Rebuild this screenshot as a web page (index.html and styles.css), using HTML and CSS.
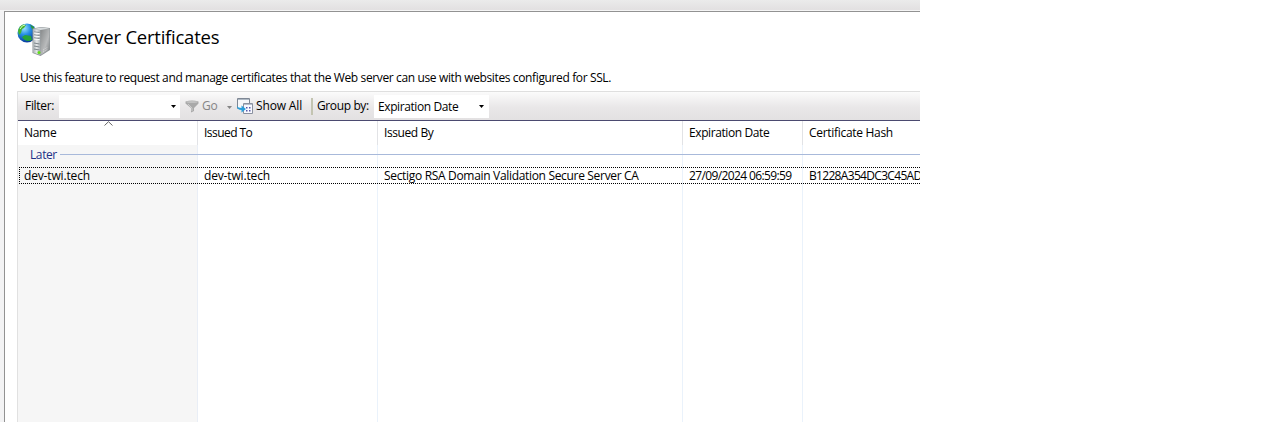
FILE: index.html
```
<!DOCTYPE html>
<html lang="en">
<head>
<meta charset="utf-8">
<title>Server Certificates</title>
<link rel="stylesheet" href="styles.css">
</head>
<body>
<div class="app">
  <div class="topbar"></div>
  <main class="panel">
    <header class="heading">
      <svg class="server-icon" viewBox="0 0 34 34" width="34" height="34">
        <defs>
          <radialGradient id="sea" cx=".35" cy=".25" r=".75"><stop offset="0" stop-color="#9be3ff"/><stop offset=".45" stop-color="#268ee5"/><stop offset="1" stop-color="#073b9c"/></radialGradient>
          <linearGradient id="front" x2="1" y2="0"><stop offset="0" stop-color="#a9afb2"/><stop offset=".5" stop-color="#e5e8e9"/><stop offset="1" stop-color="#a5abaf"/></linearGradient>
          <linearGradient id="side" x2="1" y2="1"><stop offset="0" stop-color="#858889"/><stop offset=".6" stop-color="#b9bbbc"/><stop offset="1" stop-color="#777b7d"/></linearGradient>
        </defs>
        <circle cx="10" cy="10" r="9.500" fill="url(#sea)"/>
        <path d="M1 8Q2 3 6 1.500L9 2 7 5 5 6 4 10 2 12Z" fill="#47b52b"/>
        <path d="M13 1.500L17 4 18 8 15 6Z" fill="#2c9639"/>
        <path d="M5 14L8 12 14 13 15 17Q9 20 5 14Z" fill="#24a43a"/>
        <path d="M3 6Q5 2 8 2" stroke="#d5ffc1" fill="none"/>
        <path d="M15.500 5.500L24 4 33 5 33 27 23.500 33 15.500 30Z" fill="#8c9396"/>
        <path d="M16 6L23.500 7V32L16 29.500Z" fill="url(#front)"/>
        <path d="M23.500 7L32.500 5.500V26.500L23.500 32Z" fill="url(#side)"/>
        <path d="M16 6L24 4.500 32.500 5.500 23.500 7Z" fill="#d7dbdd"/>
        <path d="M17 9L22.500 9.500M17 12L22.500 12.500M17 15L22.500 15.500M17 20L22.500 21M17 23L22.500 24M17 26L22.500 27" stroke="#7d868c"/>
        <path d="M17 10L22.500 10.500M17 13L22.500 13.500M17 16L22.500 16.500" stroke="#fff"/>
        <path d="M26 27L31 24M26 29L31 26" stroke="#d9dadb" stroke-dasharray="1 1"/>
        <circle cx="22" cy="29.500" r="1.500" fill="#60df16"/>
      </svg>
      <h1 class="title">Server Certificates</h1>
    </header>
    <p class="description">Use this feature to request and manage certificates that the Web server can use with websites configured for SSL.</p>
    <section class="certificates">
      <div class="toolbar">
        <span class="label filter-label">Filter:</span>
        <div class="combo filter-combo"><svg class="arrow" width="5" height="3" viewBox="0 0 5 3"><path d="M0 0H5L2.500 3Z"/></svg></div>
        <svg class="funnel" width="14" height="13" viewBox="0 0 14 13"><path d="M.5 1.500Q7-.5 13.500 1.500V3.500L9 8V11L6 12.500V8L.5 3.500Z" fill="#a9a9a9"/><ellipse cx="7" cy="2" rx="5.500" ry="1" fill="#c2c2c2"/><path d="M3 4L7 8V11" stroke="#cdcdcd" fill="none"/></svg>
        <span class="label go">Go</span>
        <svg class="arrow go-arrow" width="5" height="3" viewBox="0 0 5 3"><path d="M0 0H5L2.500 3Z"/></svg>
        <svg class="show-icon" width="17" height="16" viewBox="0 0 17 16"><path d="M.5.500H12.500V10.500H.5Z" fill="#f7f8fa" stroke="#7e8794"/><path d="M1 1.500H12" stroke="#aeb8c3"/><path d="M6.500 5.500H15.500V15.500H6.500Z" fill="#f8f9ff" stroke="#8a91a0"/><path d="M7 6.500H15" stroke="#b7bfcb"/><path d="M9 9H10.500V10.500H9ZM12 9H13.500V10.500H12ZM9 12H10.500V13.500H9ZM12 12H13.500V13.500H12Z" fill="#5659a8"/><path d="M0 8Q1 10 4.500 10V7.500L9 11 4.500 14.500V12Q0 12 0 8Z" fill="#2b9fdb"/></svg>
        <span class="label show-all">Show All</span>
        <span class="separator"></span>
        <span class="label group-by">Group by:</span>
        <div class="combo group-combo"><span class="label group-value">Expiration Date</span><svg class="arrow" width="5" height="3" viewBox="0 0 5 3"><path d="M0 0H5L2.500 3Z"/></svg></div>
      </div>
      <div class="columns head">
        <div class="cell"><span>Name</span><svg class="sort" width="9" height="5" viewBox="0 0 9 5"><path d="M.5 4.500L4.500.700 8.500 4.500"/></svg></div>
        <div class="cell"><span class="t-to">Issued To</span></div>
        <div class="cell"><span class="t-by">Issued By</span></div>
        <div class="cell"><span class="t-exp">Expiration Date</span></div>
        <div class="cell"><span>Certificate Hash</span></div>
      </div>
      <div class="list">
        <div class="group"><span class="t-later">Later</span><span class="rule"></span></div>
        <div class="columns row">
          <div class="cell"><span class="t-dev">dev-twi.tech</span></div>
          <div class="cell"><span class="t-dev">dev-twi.tech</span></div>
          <div class="cell"><span class="t-issuer">Sectigo RSA Domain Validation Secure Server CA</span></div>
          <div class="cell"><span class="t-date">27/09/2024 06:59:59</span></div>
          <div class="cell"><span class="t-value">B1228A354DC3C45AD</span></div>
        </div>
      </div>
    </section>
  </main>
</div>
</body>
</html>
```
FILE: styles.css
```
* { box-sizing: border-box; }
body { margin: 0; background: #fff; font: 12px/16px "Segoe UI", "Open Sans", "Noto Sans", sans-serif; color: #000; overflow: hidden; }
.app { width: 920px; height: 422px; overflow: hidden; display: flex; flex-direction: column; background: #f3f3f4; }
.topbar { height: 11px; flex: none; background: linear-gradient(#ebebeb, #e3e1e2 9px); border-bottom: 1px solid #f5f5f5; }
.panel { flex: 1; margin-left: 4px; border-left: 1px solid #929292; border-top: 1px solid #929292; background: #fff; display: flex; flex-direction: column; min-height: 0; }
.heading { height: 56px; flex: none; display: flex; padding: 11px 0 0 11px; }
.server-icon { flex: none; margin-left: 1px; }
.title { margin: 0 0 0 16px; font-size: 18.5px; line-height: 27px; font-weight: 400; white-space: nowrap; letter-spacing: -.24px; }
.description { margin: 0 0 6px 15px; height: 17px; line-height: 19px; white-space: nowrap; letter-spacing: -.37px; }
.certificates { margin-left: 12px; flex: 1; display: flex; flex-direction: column; border-left: 1px solid #e1e1e1; min-height: 0; }
.toolbar { height: 30px; flex: none; display: flex; align-items: center; border-top: 1px solid #dfdfdf; border-bottom: 1px solid #4b4a70; background: linear-gradient(#fbfbfb, #e9e7e8 55%, #e3e1e2); }
.label { white-space: nowrap; flex: none; letter-spacing: -.3px; }
.filter-label { width: 34px; margin-left: 7px; }
.combo { height: 23px; margin-top: 1px; background: #fff; display: flex; align-items: center; justify-content: flex-end; flex: none; }
.filter-combo { width: 121px; padding-right: 4px; }
.funnel { margin-left: 5px; flex: none; }
.go { width: 15px; margin-left: 3px; color: #858585; }
.go-arrow { margin: 2px 0 0 10px; fill: #858585; flex: none; }
.show-icon { margin-left: 5px; flex: none; }
.show-all { width: 47px; margin-left: 2px; letter-spacing: -.15px; }
.separator { width: 2px; height: 17px; background: #c3c4b1; margin-left: 8px; flex: none; }
.group-by { width: 52px; margin-left: 4px; letter-spacing: -.38px; }
.group-combo { width: 115px; margin-left: 5px; padding: 0 5px 0 4px; justify-content: space-between; }
.group-value { padding-top: 1px; letter-spacing: -.4px; }
.columns { display: grid; grid-template-columns: 180px 180px 305px 120px 1fr; }
.cell { white-space: nowrap; letter-spacing: -.3px; padding-left: 6px; }
.head { height: 24px; flex: none; }
.head .cell { border-right: 1px solid #e2e3e6; padding-top: 4px; }
.head .cell:last-child { border-right: 0; }
.head .cell:first-child { display: flex; position: relative; }
.sort { position: absolute; left: 86px; top: 0; fill: none; stroke: #666; }
.t-to { letter-spacing: -.55px; }
.t-by { letter-spacing: -.42px; }
.t-exp { letter-spacing: -.4px; }
.t-dev { letter-spacing: -.15px; }
.t-issuer { letter-spacing: -.32px; }
.t-date { letter-spacing: -.62px; }
.t-value { letter-spacing: -.68px; }
.list { flex: 1; background: linear-gradient(#e9eef6, #e9eef6) 179px 0 / 1px 100% no-repeat, linear-gradient(#eaf2fb, #eaf2fb) 359px 0 / 1px 100% no-repeat, linear-gradient(#eaf2fb, #eaf2fb) 664px 0 / 1px 100% no-repeat, linear-gradient(#eaf2fb, #eaf2fb) 784px 0 / 1px 100% no-repeat, linear-gradient(90deg, #f6f6f6 179px, #fff 179px); }
.group { height: 22px; display: flex; align-items: flex-start; padding: 2px 0 0 12px; color: #1e3287; }
.t-later { width: 27px; letter-spacing: -.4px; }
.rule { flex: 1; height: 1px; margin: 7px 0 0 3px; background: #a8b9da; }
.row { height: 17px; margin-left: 1px; border: 1px dotted #000; border-right: 0; grid-template-columns: 178px 180px 305px 120px 1fr; line-height: 15px; }
.row .cell { padding-left: 6px; }
.row .cell:first-child { padding-left: 4px; }
```
